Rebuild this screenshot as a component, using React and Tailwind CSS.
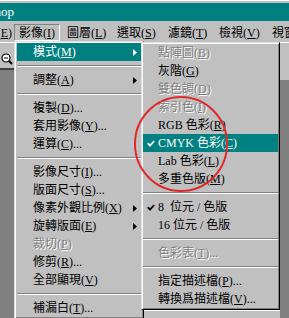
import React from "react";

const mainItems = [
  { l: "模式", k: "M", arrow: true, hi: true },
  "sep",
  { l: "調整", k: "A", arrow: true },
  "sep",
  { l: "複製", k: "D", s: "..." },
  { l: "套用影像", k: "Y", s: "..." },
  { l: "運算", k: "C", s: "..." },
  "sep",
  { l: "影像尺寸", k: "I", s: "..." },
  { l: "版面尺寸", k: "S", s: "..." },
  { l: "像素外觀比例", k: "X", arrow: true },
  { l: "旋轉版面", k: "E", arrow: true },
  { l: "裁切", k: "P", dis: true },
  { l: "修剪", k: "R", s: "..." },
  { l: "全部顯現", k: "V" },
  "sep",
  { l: "補漏白", k: "T", s: "..." },
];

const modeItems = [
  { l: "點陣圖", k: "B", dis: true },
  { l: "灰階", k: "G" },
  { l: "雙色調", k: "D", dis: true },
  { l: "索引色", k: "I", dis: true },
  { l: "RGB 色彩", k: "R" },
  { l: "CMYK 色彩", k: "C", hi: true, check: true },
  { l: "Lab 色彩", k: "L" },
  { l: "多重色版", k: "M" },
  "sep",
  { l: "8  位元 / 色版", check: true },
  { l: "16 位元 / 色版" },
  "sep",
  { l: "色彩表", k: "T", s: "...", dis: true },
  "sep",
  { l: "指定描述檔", k: "P", s: "..." },
  { l: "轉換爲描述檔", k: "V", s: "..." },
];

const bar = [
  { l: "圖層", k: "L", w: "w-[50px] pl-[7px]" },
  { l: "選取", k: "S", w: "w-[51px] pl-[7px]" },
  { l: "濾鏡", k: "T", w: "w-[51px] pl-[7px]" },
  { l: "檢視", k: "V", w: "w-[52px] pl-[7px]" },
  { l: "視窗", k: "W", w: "w-[40px] pl-[8px]" },
];

function Label({ l, k, s }) {
  return (
    <span className="whitespace-pre">
      {l}
      {k && (
        <>
          (<span className="underline underline-offset-[1px]">{k}</span>)
        </>
      )}
      {s}
    </span>
  );
}

function Arrow() {
  return (
    <svg width="4" height="7" viewBox="0 0 4 7" className="shrink-0">
      <path d="M0 0 L4 3.5 L0 7 Z" fill="currentColor" />
    </svg>
  );
}

function Check() {
  return (
    <svg width="8" height="7" viewBox="0 0 8 7">
      <path d="M0.8 3.2 L3 5.6 L7.2 1" fill="none" stroke="currentColor" strokeWidth="1.8" />
    </svg>
  );
}

function Sep() {
  return (
    <div className="flex h-[10px] items-center">
      <div className="h-[2px] w-full border-t border-b border-t-[#808080] border-b-white" />
    </div>
  );
}

function Item({ it, checkW, padR }) {
  const color = it.hi
    ? "bg-[#008080] text-white"
    : it.dis
    ? "text-[#808080] [text-shadow:1px_1px_0_#fff]"
    : "text-black";
  return (
    <div className={`flex h-[18px] items-center ${color}`}>
      <div className={`flex shrink-0 justify-center ${checkW}`}>{it.check && <Check />}</div>
      <div className="min-w-0 flex-1">
        <Label l={it.l} k={it.k} s={it.s} />
      </div>
      {it.arrow && <Arrow />}
      <div className={`shrink-0 ${padR}`} />
    </div>
  );
}

export default function App() {
  return (
    <div className="relative h-[318px] w-[289px] overflow-hidden bg-[#808080] font-['Liberation_Serif','Noto_Sans_CJK_TC',serif] text-[12px] leading-[14px]">
      {/* window frame + title bar */}
      <div className="h-[3px] border-t border-white bg-[#c0c0c0]" />
      <div className="flex h-[18px] items-center bg-[#008080] text-[13px] text-white">
        <div className="flex w-[14px] shrink-0 justify-end whitespace-nowrap">Adobe Photoshop</div>
      </div>

      {/* menu bar */}
      <div className="flex h-[21px] items-end bg-[#c0c0c0] pb-[1px] text-black">
        <div className="flex h-[17px] w-[14px] shrink-0 items-center justify-end pr-[2px]">
          <Label l="編輯" k="E" />
        </div>
        <div className="flex h-[17px] w-[46px] shrink-0 items-center border border-t-[#808080] border-l-[#808080] border-r-white border-b-white pl-[4px]">
          <Label l="影像" k="I" />
        </div>
        {bar.map((b) => (
          <div key={b.l} className={`flex h-[17px] shrink-0 items-center ${b.w}`}>
            <Label l={b.l} k={b.k} />
          </div>
        ))}
      </div>

      {/* work area behind the menus */}
      <div className="flex h-[276px]">
        <div className="flex w-[14px] flex-col">
          <div className="h-[26px] border-t border-white bg-[#c0c0c0] pt-[10px]">
            <svg width="14" height="14" viewBox="0 0 14 14">
              <circle cx="6" cy="5" r="4" fill="#fff" stroke="#000" strokeWidth="1.2" />
              <path d="M4 5 H8" stroke="#000" strokeWidth="1" />
              <path d="M9 8 L12 11" stroke="#000" strokeWidth="2" />
            </svg>
          </div>
          <div className="h-[2px] bg-[#404040]" />
          <div className="flex-1 bg-[#808080]" />
        </div>
        <div className="flex flex-1 flex-col">
          <div className="flex-1 bg-[#c0c0c0]" />
          <div className="h-[8px] border-t border-white bg-[#c0c0c0]" />
        </div>
        <div className="flex w-[9px] flex-col">
          <div className="h-[38px] border-t border-white bg-[#c0c0c0]" />
          <div className="flex-1 bg-[#808080]" />
        </div>
      </div>

      {/* 影像 dropdown */}
      <div className="absolute left-[14px] top-[41px] w-[130px] border border-t-[#dfdfdf] border-l-[#dfdfdf] border-r-black border-b-black bg-[#c0c0c0] px-[2px] pt-[1px] pb-[1px] shadow-[inset_1px_1px_0_#fff,inset_-1px_-1px_0_#808080]">
        {mainItems.map((it, i) =>
          it === "sep" ? <Sep key={i} /> : <Item key={i} it={it} checkW="w-[16px]" padR="w-[4px]" />
        )}
      </div>

      {/* 模式 submenu */}
      <div className="absolute left-[141px] top-[42px] w-[139px] border border-t-[#dfdfdf] border-l-[#dfdfdf] border-r-black border-b-black bg-[#c0c0c0] px-[1px] pt-[1px] pb-[1px] shadow-[inset_1px_1px_0_#fff,inset_-1px_-1px_0_#808080]">
        {modeItems.map((it, i) =>
          it === "sep" ? <Sep key={i} /> : <Item key={i} it={it} checkW="w-[15px]" padR="w-[4px]" />
        )}
      </div>

      {/* red annotation circle */}
      <svg className="pointer-events-none absolute left-0 top-0" width="289" height="318" viewBox="0 0 289 318">
        <ellipse cx="181" cy="144" rx="46" ry="47" fill="none" stroke="#e02a2a" strokeWidth="2" />
      </svg>
    </div>
  );
}
